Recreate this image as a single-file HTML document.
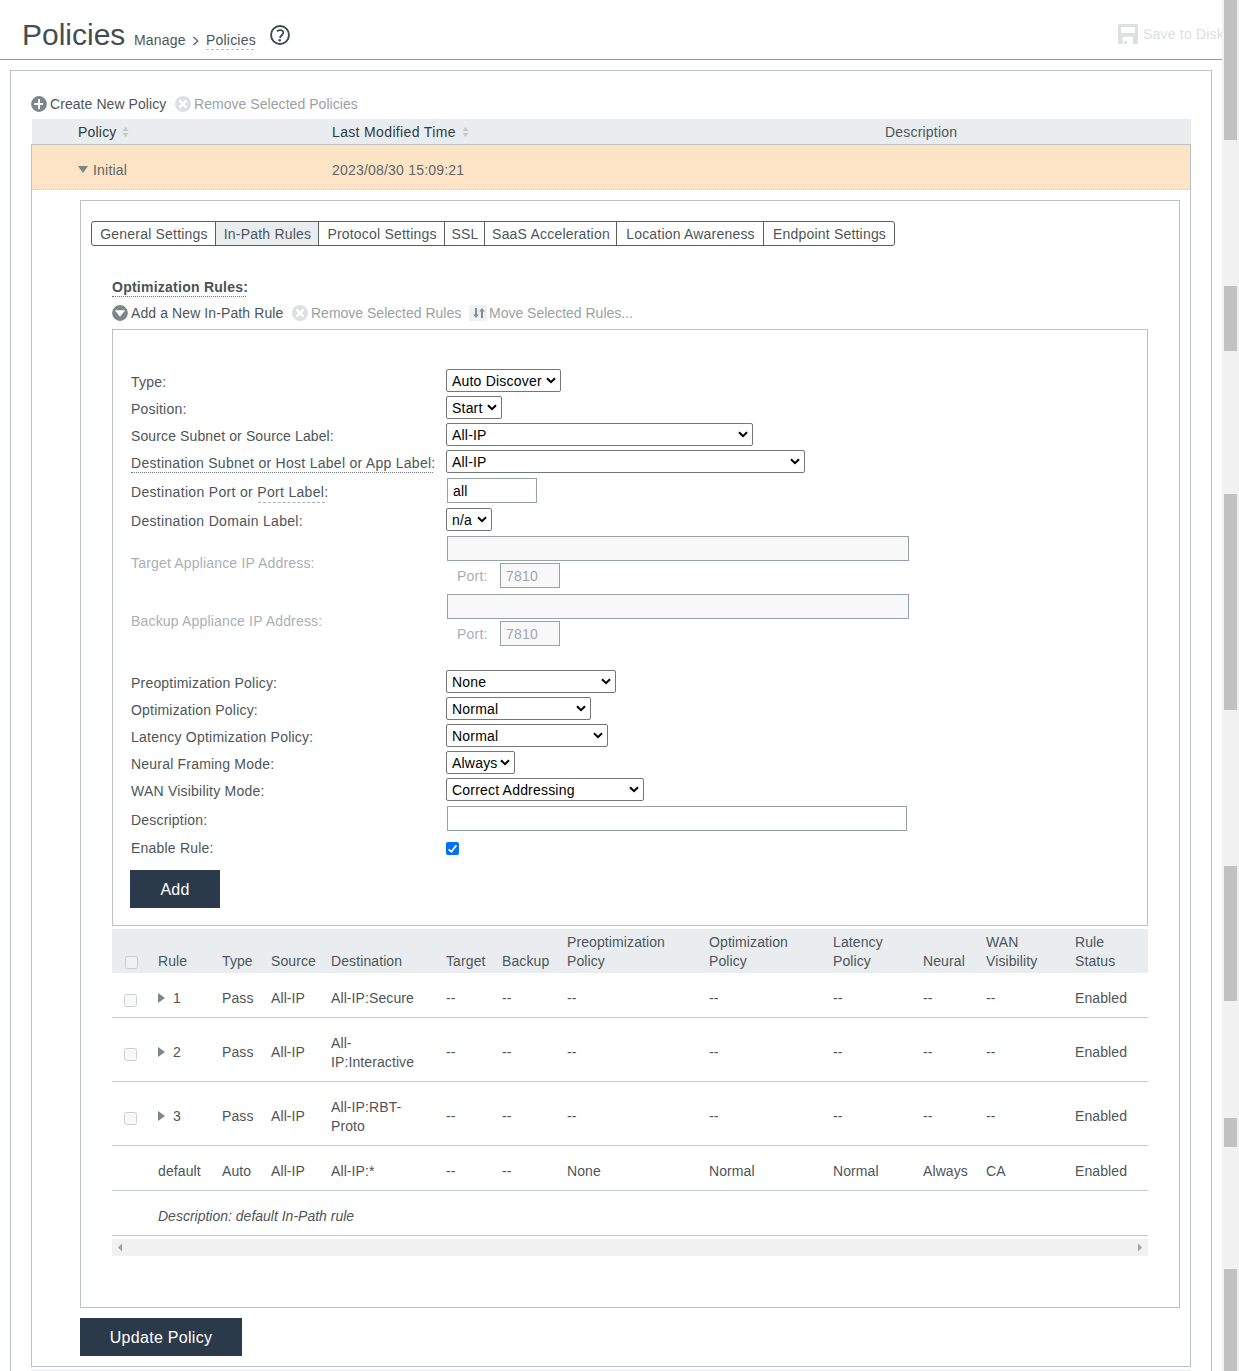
<!DOCTYPE html>
<html><head><meta charset="utf-8">
<style>
*{box-sizing:border-box;margin:0;padding:0}
html,body{width:1239px;height:1371px;overflow:hidden;background:#fff}
body{position:relative;font-family:"Liberation Sans",sans-serif;font-size:14px;color:#4d5559;letter-spacing:0.2px}
.a{position:absolute;white-space:nowrap;line-height:19px}
.ln{position:absolute}
</style></head><body>
<!-- header -->
<div class="a" style="left:22px;top:18px;font-size:30px;line-height:34px;color:#454d50;letter-spacing:0">Policies</div>
<div class="a" style="left:134px;top:31px;color:#4d5559">Manage</div>
<svg class="ln" style="left:192px;top:36px" width="9" height="10" viewBox="0 0 9 10"><path d="M1.5 1L5.8 5L1.5 9" fill="none" stroke="#5a6366" stroke-width="1.3"/></svg>
<div class="a" style="left:206px;top:31px;color:#4d5559">Policies</div>
<div class="ln" style="left:206px;top:49px;width:48px;border-top:1px dashed #b5bcbf"></div>
<svg class="ln" style="left:269px;top:24px" width="22" height="22" viewBox="0 0 22 22"><circle cx="11" cy="11" r="8.95" fill="none" stroke="#3e4a4c" stroke-width="1.9"/><path d="M7.9 7.3 Q10.6 5.4 13 6.4 Q15.2 7.8 13.6 10.2 Q11.6 12.1 10.9 13.9" fill="none" stroke="#3e4a4c" stroke-width="1.8"/><circle cx="10.7" cy="16.2" r="1.25" fill="#3e4a4c"/></svg>
<svg class="ln" style="left:1118px;top:24px" width="20" height="20" viewBox="0 0 20 20"><path d="M0 2 Q0 0 2 0 H18 Q20 0 20 2 V20 H0 Z M3 3 V9 H17 V3 Z M4.7 12.7 V20 H15 V12.7 Z" fill="#dde0e2" fill-rule="evenodd"/><rect x="6.2" y="17" width="2.8" height="3" fill="#dde0e2"/></svg>
<div class="a" style="left:1143px;top:25px;color:#dde0e3">Save to Disk</div>
<div class="ln" style="left:0;top:59px;width:1222px;height:1px;background:#8e9e9e"></div>

<!-- scrollbar -->
<div class="ln" style="left:1222px;top:0;width:17px;height:1371px;background:#f1f1f1"></div>
<div class="ln" style="left:1224px;top:0;width:13px;height:140px;background:#c1c1c1"></div>
<div class="ln" style="left:1224px;top:286px;width:13px;height:65px;background:#c1c1c1"></div>
<div class="ln" style="left:1224px;top:494px;width:13px;height:216px;background:#c1c1c1"></div>
<div class="ln" style="left:1224px;top:866px;width:13px;height:135px;background:#c1c1c1"></div>
<div class="ln" style="left:1224px;top:1118px;width:13px;height:29px;background:#c1c1c1"></div>
<div class="ln" style="left:1224px;top:1269px;width:13px;height:102px;background:#c1c1c1"></div>

<!-- outer container -->
<div class="ln" style="left:10px;top:70px;width:1202px;height:1320px;border:1px solid #bdc3c7"></div>

<!-- toolbar -->
<svg class="ln" style="left:31px;top:96px" width="16" height="16" viewBox="0 0 16 16"><circle cx="8" cy="8" r="7.9" fill="#7b8789"/><path d="M8 2.9V13.1M3.3 8H12" stroke="#fff" stroke-width="2"/></svg>
<div class="a" style="left:50px;top:95px;color:#4d5559;letter-spacing:0.07px">Create New Policy</div>
<svg class="ln" style="left:175px;top:96px" width="16" height="16" viewBox="0 0 16 16"><circle cx="8" cy="8" r="8" fill="#dde0e1"/><path d="M4.4 4.4L11.6 11.6M11.6 4.4L4.4 11.6" stroke="#fff" stroke-width="2.3"/></svg>
<div class="a" style="left:194px;top:95px;color:#9aa1a4;letter-spacing:0.05px">Remove Selected Policies</div>

<!-- policy table -->
<div class="ln" style="left:32px;top:119px;width:1159px;height:25px;background:#e9edf0"></div>
<div class="a" style="left:78px;top:123px;color:#2f3b40">Policy</div>
<svg class="ln" style="left:122px;top:126px" width="7" height="12" viewBox="0 0 7 12"><path d="M0.5 5L3.5 1L6.5 5Z M0.5 7L3.5 11L6.5 7Z" fill="#c3c9cc"/></svg>
<div class="a" style="left:332px;top:123px;color:#2f3b40;letter-spacing:0.35px">Last Modified Time</div>
<svg class="ln" style="left:462px;top:126px" width="7" height="12" viewBox="0 0 7 12"><path d="M0.5 5L3.5 1L6.5 5Z M0.5 7L3.5 11L6.5 7Z" fill="#c3c9cc"/></svg>
<div class="a" style="left:885px;top:123px;color:#4d5559">Description</div>
<div class="ln" style="left:31px;top:144px;width:1160px;height:1223px;border:1px solid #bcc3c8"></div>
<div class="ln" style="left:32px;top:145px;width:1158px;height:45px;background:#fce4c4"></div>
<div class="ln" style="left:32px;top:189px;width:1158px;border-top:1px dotted #c8cdd0"></div>
<svg class="ln" style="left:78px;top:166px" width="11" height="8" viewBox="0 0 11 8"><path d="M0 0H10L5 7Z" fill="#7b8789"/></svg>
<div class="a" style="left:93px;top:161px;color:#5d676b">Initial</div>
<div class="a" style="left:332px;top:161px;color:#5d676b">2023/08/30 15:09:21</div>
<div class="ln" style="left:31px;top:1370px;width:1160px;height:1px;background:#e8ebed"></div>

<!-- inner panel -->
<div class="ln" style="left:80px;top:200px;width:1100px;height:1108px;border:1px solid #bcc3c8"></div>

<!-- tabs -->
<div class="ln" style="left:91px;top:221px;width:804px;height:25px;border:1px solid #55605f;border-radius:3px"></div>
<div class="a" style="left:92px;width:124px;text-align:center;top:225px;color:#4d5559">General Settings</div>
<div class="ln" style="left:216px;top:222px;width:102px;height:23px;background:#e9edf0"></div>
<div class="ln" style="left:215px;top:222px;width:1px;height:23px;background:#55605f"></div>
<div class="a" style="left:216px;width:103px;text-align:center;top:225px;color:#4d5559">In-Path Rules</div>
<div class="ln" style="left:318px;top:222px;width:1px;height:23px;background:#55605f"></div>
<div class="a" style="left:319px;width:126px;text-align:center;top:225px;color:#4d5559">Protocol Settings</div>
<div class="ln" style="left:444px;top:222px;width:1px;height:23px;background:#55605f"></div>
<div class="a" style="left:445px;width:40px;text-align:center;top:225px;color:#4d5559">SSL</div>
<div class="ln" style="left:484px;top:222px;width:1px;height:23px;background:#55605f"></div>
<div class="a" style="left:485px;width:132px;text-align:center;top:225px;color:#4d5559">SaaS Acceleration</div>
<div class="ln" style="left:616px;top:222px;width:1px;height:23px;background:#55605f"></div>
<div class="a" style="left:617px;width:147px;text-align:center;top:225px;color:#4d5559">Location Awareness</div>
<div class="ln" style="left:763px;top:222px;width:1px;height:23px;background:#55605f"></div>
<div class="a" style="left:764px;width:131px;text-align:center;top:225px;color:#4d5559">Endpoint Settings</div>

<!-- optimization rules -->
<div class="a" style="left:112px;top:278px;font-weight:bold;color:#4a5256;letter-spacing:0.25px">Optimization Rules:</div>
<div class="ln" style="left:112px;top:296px;width:134px;border-top:1px dotted #6a7377"></div>
<svg class="ln" style="left:112px;top:305px" width="16" height="16" viewBox="0 0 16 16"><circle cx="8" cy="8" r="7.9" fill="#7b8789"/><path d="M2.8 5.2H13.2L8 11.7Z" fill="#fff"/></svg>
<div class="a" style="left:131px;top:304px;color:#4d5559;letter-spacing:0.1px">Add a New In-Path Rule</div>
<svg class="ln" style="left:292px;top:305px" width="16" height="16" viewBox="0 0 16 16"><circle cx="8" cy="8" r="8" fill="#dde0e1"/><path d="M4.4 4.4L11.6 11.6M11.6 4.4L4.4 11.6" stroke="#fff" stroke-width="2.3"/></svg>
<div class="a" style="left:311px;top:304px;color:#9aa1a4;letter-spacing:0">Remove Selected Rules</div>
<div class="ln" style="left:469px;top:305px;width:18px;height:16px;background:#eef1f4"></div>
<svg class="ln" style="left:473px;top:308px" width="12" height="10" viewBox="0 0 12 10"><path d="M2 0H4V6.5H5.8L3 10L0.2 6.5H2Z M8 10H10V3.5H11.8L9 0L6.2 3.5H8Z" fill="#858c91"/></svg>
<div class="a" style="left:489px;top:304px;color:#9aa1a4;letter-spacing:0">Move Selected Rules...</div>

<!-- form panel -->
<div class="ln" style="left:112px;top:329px;width:1036px;height:597px;border:1px solid #bcc3c8"></div>

<!-- form labels -->
<div class="a" style="left:131px;top:373px;color:#4d5559">Type:</div>
<div class="a" style="left:131px;top:400px;color:#4d5559">Position:</div>
<div class="a" style="left:131px;top:427px;color:#4d5559;letter-spacing:0.12px">Source Subnet or Source Label:</div>
<div class="a" style="left:131px;top:454px;color:#4d5559;letter-spacing:0.275px">Destination Subnet or Host Label or App Label:</div>
<div class="a" style="left:131px;top:483px;color:#4d5559;letter-spacing:0.32px">Destination Port or Port Label:</div>
<div class="a" style="left:131px;top:512px;color:#4d5559;letter-spacing:0.31px">Destination Domain Label:</div>
<div class="a" style="left:131px;top:554px;color:#a9b0b4;letter-spacing:0.175px">Target Appliance IP Address:</div>
<div class="a" style="left:131px;top:612px;color:#a9b0b4;letter-spacing:0.17px">Backup Appliance IP Address:</div>
<div class="a" style="left:131px;top:674px;color:#4d5559">Preoptimization Policy:</div>
<div class="a" style="left:131px;top:701px;color:#4d5559">Optimization Policy:</div>
<div class="a" style="left:131px;top:728px;color:#4d5559;letter-spacing:0.235px">Latency Optimization Policy:</div>
<div class="a" style="left:131px;top:755px;color:#4d5559">Neural Framing Mode:</div>
<div class="a" style="left:131px;top:782px;color:#4d5559;letter-spacing:0.22px">WAN Visibility Mode:</div>
<div class="a" style="left:131px;top:811px;color:#4d5559">Description:</div>
<div class="a" style="left:131px;top:839px;color:#4d5559">Enable Rule:</div>
<div class="ln" style="left:131px;top:472px;width:302px;border-top:1px dotted #6a7377"></div>
<div class="ln" style="left:258px;top:502px;width:67px;border-top:1px dashed #aab1b4"></div>

<!-- form controls -->
<div class="ln" style="left:446px;top:369px;width:115px;height:23px;border:1px solid #767676;border-radius:2px;background:#fff"></div>
<div class="a" style="left:452px;top:372px;color:#000">Auto Discover</div>
<svg class="ln" style="left:546px;top:377px" width="10" height="7" viewBox="0 0 10 7"><path d="M1 1.2L5 5.2L9 1.2" fill="none" stroke="#000" stroke-width="2"/></svg>
<div class="ln" style="left:446px;top:396px;width:56px;height:23px;border:1px solid #767676;border-radius:2px;background:#fff"></div>
<div class="a" style="left:452px;top:399px;color:#000">Start</div>
<svg class="ln" style="left:487px;top:404px" width="10" height="7" viewBox="0 0 10 7"><path d="M1 1.2L5 5.2L9 1.2" fill="none" stroke="#000" stroke-width="2"/></svg>
<div class="ln" style="left:446px;top:423px;width:307px;height:23px;border:1px solid #767676;border-radius:2px;background:#fff"></div>
<div class="a" style="left:452px;top:426px;color:#000">All-IP</div>
<svg class="ln" style="left:738px;top:431px" width="10" height="7" viewBox="0 0 10 7"><path d="M1 1.2L5 5.2L9 1.2" fill="none" stroke="#000" stroke-width="2"/></svg>
<div class="ln" style="left:446px;top:450px;width:359px;height:23px;border:1px solid #767676;border-radius:2px;background:#fff"></div>
<div class="a" style="left:452px;top:453px;color:#000">All-IP</div>
<svg class="ln" style="left:790px;top:458px" width="10" height="7" viewBox="0 0 10 7"><path d="M1 1.2L5 5.2L9 1.2" fill="none" stroke="#000" stroke-width="2"/></svg>
<div class="ln" style="left:447px;top:478px;width:90px;height:25px;border:1px solid #94a3a3;background:#fff"></div>
<div class="a" style="left:453px;top:482px;color:#000">all</div>
<div class="ln" style="left:446px;top:508px;width:46px;height:23px;border:1px solid #767676;border-radius:2px;background:#fff"></div>
<div class="a" style="left:452px;top:511px;color:#000">n/a</div>
<svg class="ln" style="left:477px;top:516px" width="10" height="7" viewBox="0 0 10 7"><path d="M1 1.2L5 5.2L9 1.2" fill="none" stroke="#000" stroke-width="2"/></svg>
<div class="ln" style="left:447px;top:536px;width:462px;height:25px;border:1px solid #94a3a3;background:#f8f8f8"></div>
<div class="a" style="left:457px;top:567px;color:#a9b0b4">Port:</div>
<div class="ln" style="left:500px;top:563px;width:60px;height:25px;border:1px solid #94a3a3;background:#f8f8f8"></div>
<div class="a" style="left:506px;top:567px;color:#a0a7ab">7810</div>
<div class="ln" style="left:447px;top:594px;width:462px;height:25px;border:1px solid #94a3a3;background:#f8f8f8"></div>
<div class="a" style="left:457px;top:625px;color:#a9b0b4">Port:</div>
<div class="ln" style="left:500px;top:621px;width:60px;height:25px;border:1px solid #94a3a3;background:#f8f8f8"></div>
<div class="a" style="left:506px;top:625px;color:#a0a7ab">7810</div>
<div class="ln" style="left:446px;top:670px;width:170px;height:23px;border:1px solid #767676;border-radius:2px;background:#fff"></div>
<div class="a" style="left:452px;top:673px;color:#000">None</div>
<svg class="ln" style="left:601px;top:678px" width="10" height="7" viewBox="0 0 10 7"><path d="M1 1.2L5 5.2L9 1.2" fill="none" stroke="#000" stroke-width="2"/></svg>
<div class="ln" style="left:446px;top:697px;width:145px;height:23px;border:1px solid #767676;border-radius:2px;background:#fff"></div>
<div class="a" style="left:452px;top:700px;color:#000">Normal</div>
<svg class="ln" style="left:576px;top:705px" width="10" height="7" viewBox="0 0 10 7"><path d="M1 1.2L5 5.2L9 1.2" fill="none" stroke="#000" stroke-width="2"/></svg>
<div class="ln" style="left:446px;top:724px;width:162px;height:23px;border:1px solid #767676;border-radius:2px;background:#fff"></div>
<div class="a" style="left:452px;top:727px;color:#000">Normal</div>
<svg class="ln" style="left:593px;top:732px" width="10" height="7" viewBox="0 0 10 7"><path d="M1 1.2L5 5.2L9 1.2" fill="none" stroke="#000" stroke-width="2"/></svg>
<div class="ln" style="left:446px;top:751px;width:69px;height:23px;border:1px solid #767676;border-radius:2px;background:#fff"></div>
<div class="a" style="left:452px;top:754px;color:#000">Always</div>
<svg class="ln" style="left:500px;top:759px" width="10" height="7" viewBox="0 0 10 7"><path d="M1 1.2L5 5.2L9 1.2" fill="none" stroke="#000" stroke-width="2"/></svg>
<div class="ln" style="left:446px;top:778px;width:198px;height:23px;border:1px solid #767676;border-radius:2px;background:#fff"></div>
<div class="a" style="left:452px;top:781px;color:#000">Correct Addressing</div>
<svg class="ln" style="left:629px;top:786px" width="10" height="7" viewBox="0 0 10 7"><path d="M1 1.2L5 5.2L9 1.2" fill="none" stroke="#000" stroke-width="2"/></svg>
<div class="ln" style="left:447px;top:806px;width:460px;height:25px;border:1px solid #94a3a3;background:#fff"></div>
<svg class="ln" style="left:446px;top:842px" width="13" height="13" viewBox="0 0 13 13"><rect x="0" y="0" width="13" height="13" rx="2" fill="#0071f5"/><path d="M2.6 7.3L5.4 9.8L10.4 3.2" fill="none" stroke="#fff" stroke-width="1.8"/></svg>
<div class="ln" style="left:130px;top:870px;width:90px;height:38px;background:#2b3a4b"></div>
<div class="a" style="left:130px;top:879px;width:90px;text-align:center;color:#fff;font-size:16px;line-height:22px">Add</div>

<!-- rules table -->
<div class="ln" style="left:112px;top:929px;width:1036px;height:44px;background:#e9edf0"></div>
<div class="ln" style="left:125px;top:956px;width:13px;height:13px;border:1px solid #c8cbce;border-radius:2.5px;background:#eff1f3"></div>
<div class="a" style="left:158px;top:952px;color:#4d5559;letter-spacing:0.1px">Rule</div>
<div class="a" style="left:222px;top:952px;color:#4d5559;letter-spacing:0.1px">Type</div>
<div class="a" style="left:271px;top:952px;color:#4d5559;letter-spacing:0.1px">Source</div>
<div class="a" style="left:331px;top:952px;color:#4d5559;letter-spacing:0.1px">Destination</div>
<div class="a" style="left:446px;top:952px;color:#4d5559;letter-spacing:0.1px">Target</div>
<div class="a" style="left:502px;top:952px;color:#4d5559;letter-spacing:0.1px">Backup</div>
<div class="a" style="left:567px;top:933px;color:#4d5559;letter-spacing:0.1px">Preoptimization</div>
<div class="a" style="left:567px;top:952px;color:#4d5559;letter-spacing:0.1px">Policy</div>
<div class="a" style="left:709px;top:933px;color:#4d5559;letter-spacing:0.1px">Optimization</div>
<div class="a" style="left:709px;top:952px;color:#4d5559;letter-spacing:0.1px">Policy</div>
<div class="a" style="left:833px;top:933px;color:#4d5559;letter-spacing:0.1px">Latency</div>
<div class="a" style="left:833px;top:952px;color:#4d5559;letter-spacing:0.1px">Policy</div>
<div class="a" style="left:923px;top:952px;color:#4d5559;letter-spacing:0.1px">Neural</div>
<div class="a" style="left:986px;top:933px;color:#4d5559;letter-spacing:0.1px">WAN</div>
<div class="a" style="left:986px;top:952px;color:#4d5559;letter-spacing:0.1px">Visibility</div>
<div class="a" style="left:1075px;top:933px;color:#4d5559;letter-spacing:0.1px">Rule</div>
<div class="a" style="left:1075px;top:952px;color:#4d5559;letter-spacing:0.1px">Status</div>
<div class="ln" style="left:124px;top:994px;width:13px;height:13px;border:1px solid #cdd0d3;border-radius:2.5px;background:#f8f8f8"></div>
<svg class="ln" style="left:158px;top:993px" width="7" height="10" viewBox="0 0 7 10"><path d="M0 0L7 5L0 10Z" fill="#7b8789"/></svg>
<div class="a" style="left:173px;top:989px;color:#4d5559;letter-spacing:0.1px">1</div>
<div class="a" style="left:222px;top:989px;color:#4d5559;letter-spacing:0.1px">Pass</div>
<div class="a" style="left:271px;top:989px;color:#4d5559;letter-spacing:0.1px">All-IP</div>
<div class="a" style="left:331px;top:989px;color:#4d5559;letter-spacing:0.1px">All-IP:Secure</div>
<div class="a" style="left:446px;top:989px;color:#4d5559;letter-spacing:0.1px">--</div>
<div class="a" style="left:502px;top:989px;color:#4d5559;letter-spacing:0.1px">--</div>
<div class="a" style="left:567px;top:989px;color:#4d5559;letter-spacing:0.1px">--</div>
<div class="a" style="left:709px;top:989px;color:#4d5559;letter-spacing:0.1px">--</div>
<div class="a" style="left:833px;top:989px;color:#4d5559;letter-spacing:0.1px">--</div>
<div class="a" style="left:923px;top:989px;color:#4d5559;letter-spacing:0.1px">--</div>
<div class="a" style="left:986px;top:989px;color:#4d5559;letter-spacing:0.1px">--</div>
<div class="a" style="left:1075px;top:989px;color:#4d5559;letter-spacing:0.1px">Enabled</div>
<div class="ln" style="left:112px;top:1017px;width:1036px;height:1px;background:#c5cad0"></div>
<div class="ln" style="left:124px;top:1048px;width:13px;height:13px;border:1px solid #cdd0d3;border-radius:2.5px;background:#f8f8f8"></div>
<svg class="ln" style="left:158px;top:1047px" width="7" height="10" viewBox="0 0 7 10"><path d="M0 0L7 5L0 10Z" fill="#7b8789"/></svg>
<div class="a" style="left:173px;top:1043px;color:#4d5559;letter-spacing:0.1px">2</div>
<div class="a" style="left:222px;top:1043px;color:#4d5559;letter-spacing:0.1px">Pass</div>
<div class="a" style="left:271px;top:1043px;color:#4d5559;letter-spacing:0.1px">All-IP</div>
<div class="a" style="left:331px;top:1034px;color:#4d5559;letter-spacing:0.1px">All-</div>
<div class="a" style="left:331px;top:1053px;color:#4d5559;letter-spacing:0.1px">IP:Interactive</div>
<div class="a" style="left:446px;top:1043px;color:#4d5559;letter-spacing:0.1px">--</div>
<div class="a" style="left:502px;top:1043px;color:#4d5559;letter-spacing:0.1px">--</div>
<div class="a" style="left:567px;top:1043px;color:#4d5559;letter-spacing:0.1px">--</div>
<div class="a" style="left:709px;top:1043px;color:#4d5559;letter-spacing:0.1px">--</div>
<div class="a" style="left:833px;top:1043px;color:#4d5559;letter-spacing:0.1px">--</div>
<div class="a" style="left:923px;top:1043px;color:#4d5559;letter-spacing:0.1px">--</div>
<div class="a" style="left:986px;top:1043px;color:#4d5559;letter-spacing:0.1px">--</div>
<div class="a" style="left:1075px;top:1043px;color:#4d5559;letter-spacing:0.1px">Enabled</div>
<div class="ln" style="left:112px;top:1081px;width:1036px;height:1px;background:#c5cad0"></div>
<div class="ln" style="left:124px;top:1112px;width:13px;height:13px;border:1px solid #cdd0d3;border-radius:2.5px;background:#f8f8f8"></div>
<svg class="ln" style="left:158px;top:1111px" width="7" height="10" viewBox="0 0 7 10"><path d="M0 0L7 5L0 10Z" fill="#7b8789"/></svg>
<div class="a" style="left:173px;top:1107px;color:#4d5559;letter-spacing:0.1px">3</div>
<div class="a" style="left:222px;top:1107px;color:#4d5559;letter-spacing:0.1px">Pass</div>
<div class="a" style="left:271px;top:1107px;color:#4d5559;letter-spacing:0.1px">All-IP</div>
<div class="a" style="left:331px;top:1098px;color:#4d5559;letter-spacing:0.1px">All-IP:RBT-</div>
<div class="a" style="left:331px;top:1117px;color:#4d5559;letter-spacing:0.1px">Proto</div>
<div class="a" style="left:446px;top:1107px;color:#4d5559;letter-spacing:0.1px">--</div>
<div class="a" style="left:502px;top:1107px;color:#4d5559;letter-spacing:0.1px">--</div>
<div class="a" style="left:567px;top:1107px;color:#4d5559;letter-spacing:0.1px">--</div>
<div class="a" style="left:709px;top:1107px;color:#4d5559;letter-spacing:0.1px">--</div>
<div class="a" style="left:833px;top:1107px;color:#4d5559;letter-spacing:0.1px">--</div>
<div class="a" style="left:923px;top:1107px;color:#4d5559;letter-spacing:0.1px">--</div>
<div class="a" style="left:986px;top:1107px;color:#4d5559;letter-spacing:0.1px">--</div>
<div class="a" style="left:1075px;top:1107px;color:#4d5559;letter-spacing:0.1px">Enabled</div>
<div class="ln" style="left:112px;top:1145px;width:1036px;height:1px;background:#c5cad0"></div>
<div class="a" style="left:158px;top:1162px;color:#4d5559;letter-spacing:0.1px">default</div>
<div class="a" style="left:222px;top:1162px;color:#4d5559;letter-spacing:0.1px">Auto</div>
<div class="a" style="left:271px;top:1162px;color:#4d5559;letter-spacing:0.1px">All-IP</div>
<div class="a" style="left:331px;top:1162px;color:#4d5559;letter-spacing:0.1px">All-IP:*</div>
<div class="a" style="left:446px;top:1162px;color:#4d5559;letter-spacing:0.1px">--</div>
<div class="a" style="left:502px;top:1162px;color:#4d5559;letter-spacing:0.1px">--</div>
<div class="a" style="left:567px;top:1162px;color:#4d5559;letter-spacing:0.1px">None</div>
<div class="a" style="left:709px;top:1162px;color:#4d5559;letter-spacing:0.1px">Normal</div>
<div class="a" style="left:833px;top:1162px;color:#4d5559;letter-spacing:0.1px">Normal</div>
<div class="a" style="left:923px;top:1162px;color:#4d5559;letter-spacing:0.1px">Always</div>
<div class="a" style="left:986px;top:1162px;color:#4d5559;letter-spacing:0.1px">CA</div>
<div class="a" style="left:1075px;top:1162px;color:#4d5559;letter-spacing:0.1px">Enabled</div>
<div class="ln" style="left:112px;top:1190px;width:1036px;height:1px;background:#c5cad0"></div>
<div class="a" style="left:158px;top:1207px;color:#4d5559;font-style:italic;letter-spacing:0">Description: default In-Path rule</div>
<div class="ln" style="left:112px;top:1235px;width:1036px;height:1px;background:#c5cad0"></div>
<div class="ln" style="left:112px;top:1239px;width:1036px;height:17px;background:#f1f1f1"></div>
<svg class="ln" style="left:117px;top:1243px" width="6" height="9" viewBox="0 0 6 9"><path d="M5 0.5L1 4.5L5 8.5Z" fill="#a3a3a3"/></svg>
<svg class="ln" style="left:1137px;top:1243px" width="6" height="9" viewBox="0 0 6 9"><path d="M1 0.5L5 4.5L1 8.5Z" fill="#a3a3a3"/></svg>
<div class="ln" style="left:80px;top:1318px;width:162px;height:38px;background:#2b3a4b"></div>
<div class="a" style="left:80px;top:1327px;width:162px;text-align:center;color:#fff;font-size:16px;line-height:22px;letter-spacing:0.3px">Update Policy</div>
</body></html>
